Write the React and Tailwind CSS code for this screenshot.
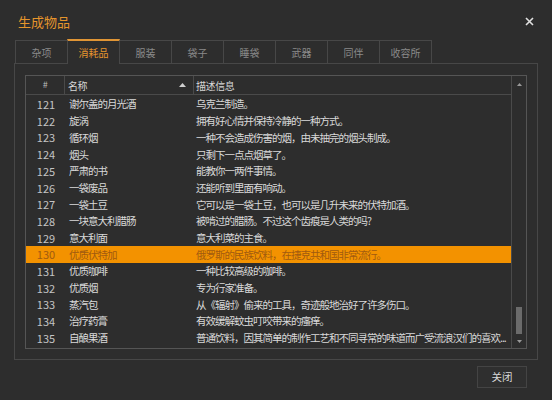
import React from "react";

const tabs = ["杂项", "消耗品", "服装", "袋子", "睡袋", "武器", "同伴", "收容所"];

const rows = [
  [121, "谢尔盖的月光酒", "乌克兰制造。"],
  [122, "旋涡", "拥有好心情并保持冷静的一种方式。"],
  [123, "循环烟", "一种不会造成伤害的烟，由未抽完的烟头制成。"],
  [124, "烟头", "只剩下一点点烟草了。"],
  [125, "严肃的书", "能教你一两件事情。"],
  [126, "一袋废品", "还能听到里面有响动。"],
  [127, "一袋土豆", "它可以是一袋土豆，也可以是几升未来的伏特加酒。"],
  [128, "一块意大利腊肠", "被啃过的腊肠。不过这个齿痕是人类的吗?"],
  [129, "意大利面", "意大利菜的主食。"],
  [130, "优质伏特加", "俄罗斯的民族饮料，在捷克共和国非常流行。"],
  [131, "优质咖啡", "一种比较高级的咖啡。"],
  [132, "优质烟", "专为行家准备。"],
  [133, "蒸汽包", "从《辐射》偷来的工具，奇迹般地治好了许多伤口。"],
  [134, "治疗药膏", "有效缓解蚊虫叮咬带来的瘙痒。"],
  [135, "自酿果酒", "普通饮料，因其简单的制作工艺和不同寻常的味道而广受流浪汉们的喜欢..."],
];

const font = { fontFamily: '"Noto Sans CJK SC", "Noto Sans", sans-serif' };

export default function App() {
  const selected = 130;

  return (
    <div
      className="w-[552px] h-[400px] bg-[#2d2d2d] flex flex-col overflow-hidden"
      style={font}
    >
      {/* title bar */}
      <div className="h-[40px] pt-[3px] pl-[18px] pr-[18px] flex items-center justify-between">
        <span className="text-[13px] text-[#e6952c]">生成物品</span>
        <svg width="9" height="9" viewBox="0 0 9 9" className="text-[#e0e0e0]">
          <path d="M1 1 L8 8 M8 1 L1 8" stroke="currentColor" strokeWidth="1.6" />
        </svg>
      </div>

      {/* tabs */}
      <div className="flex items-end pl-[15px] h-[23px]">
        {tabs.map((t) => {
          const active = t === "消耗品";
          return (
            <div
              key={t}
              className={`w-[53px] flex items-center justify-center text-[10px] border-l border-r border-[#474747] -mr-px ${
                active
                  ? "h-[25px] -mb-px border-t-2 border-t-[#e09535] text-[#e8962e] bg-[#2d2d2d] relative z-10"
                  : "h-[23px] border-t text-[#8a8a8a]"
              }`}
            >
              {t}
            </div>
          );
        })}
      </div>

      {/* panel */}
      <div className="ml-[14px] w-[524px] h-[297px] border border-[#474747] pt-[11px] px-[10px]">
        <div className="h-[274px] border border-[#555555] flex">
          {/* list */}
          <div className="flex-1 flex flex-col overflow-hidden">
            <div className="h-[19px] shrink-0 flex border-b border-[#4a4a4a] text-[10px] tracking-[-0.4px] text-[#d6d6d6]">
              <div className="w-[39px] flex items-center justify-center border-r border-[#4a4a4a] text-[9px] text-[#bdbdbd]">
                #
              </div>
              <div className="w-[129px] flex items-center justify-between pl-[3px] pr-[7px] border-r border-[#4a4a4a]">
                <span>名称</span>
                <svg width="7" height="4" viewBox="0 0 7 4">
                  <path d="M0 4 L3.5 0 L7 4 Z" fill="#d0d0d0" />
                </svg>
              </div>
              <div className="flex-1 flex items-center pl-[2px]">描述信息</div>
            </div>
            <div className="pt-[1px]">
              {rows.map(([n, name, desc]) => {
                const sel = n === selected;
                return (
                  <div
                    key={n}
                    className={`h-[16.7px] flex items-center text-[10.5px] whitespace-nowrap ${
                      sel ? "bg-[#f39200] text-[#a05a10]" : "text-[#d9d9d9]"
                    }`}
                  >
                    <div className={`w-[40px] text-center text-[11px] ${sel ? "" : "text-[#c4c4c4]"}`}>{n}</div>
                    <div className="w-[128px] pl-[3px] overflow-hidden tracking-[-1px]">{name}</div>
                    <div className="flex-1 pl-[2px] overflow-hidden tracking-[-1px]">{desc}</div>
                  </div>
                );
              })}
            </div>
          </div>

          {/* scrollbar */}
          <div className="w-[15px] border-l border-[#4a4a4a] flex flex-col items-center">
            <div className="h-[16px] flex items-center justify-center">
              <svg width="5" height="3" viewBox="0 0 5 3">
                <path d="M0 3 L2.5 0 L5 3 Z" fill="#9a9a9a" />
              </svg>
            </div>
            <div className="flex-1 w-full flex flex-col items-center justify-end pb-[1px]">
              <div className="w-[6px] h-[27px] bg-[#6b6b6b]" />
            </div>
            <div className="h-[13px] flex items-center justify-center">
              <svg width="5" height="3" viewBox="0 0 5 3">
                <path d="M0 0 L2.5 3 L5 0 Z" fill="#9a9a9a" />
              </svg>
            </div>
          </div>
        </div>
      </div>

      {/* footer */}
      <div className="flex justify-end pr-[25px] pt-[6px]">
        <button className="w-[50px] h-[22px] border border-[#444444] bg-[#2f2f2f] text-[10.5px] text-[#d8d8d8]">
          关闭
        </button>
      </div>
    </div>
  );
}
